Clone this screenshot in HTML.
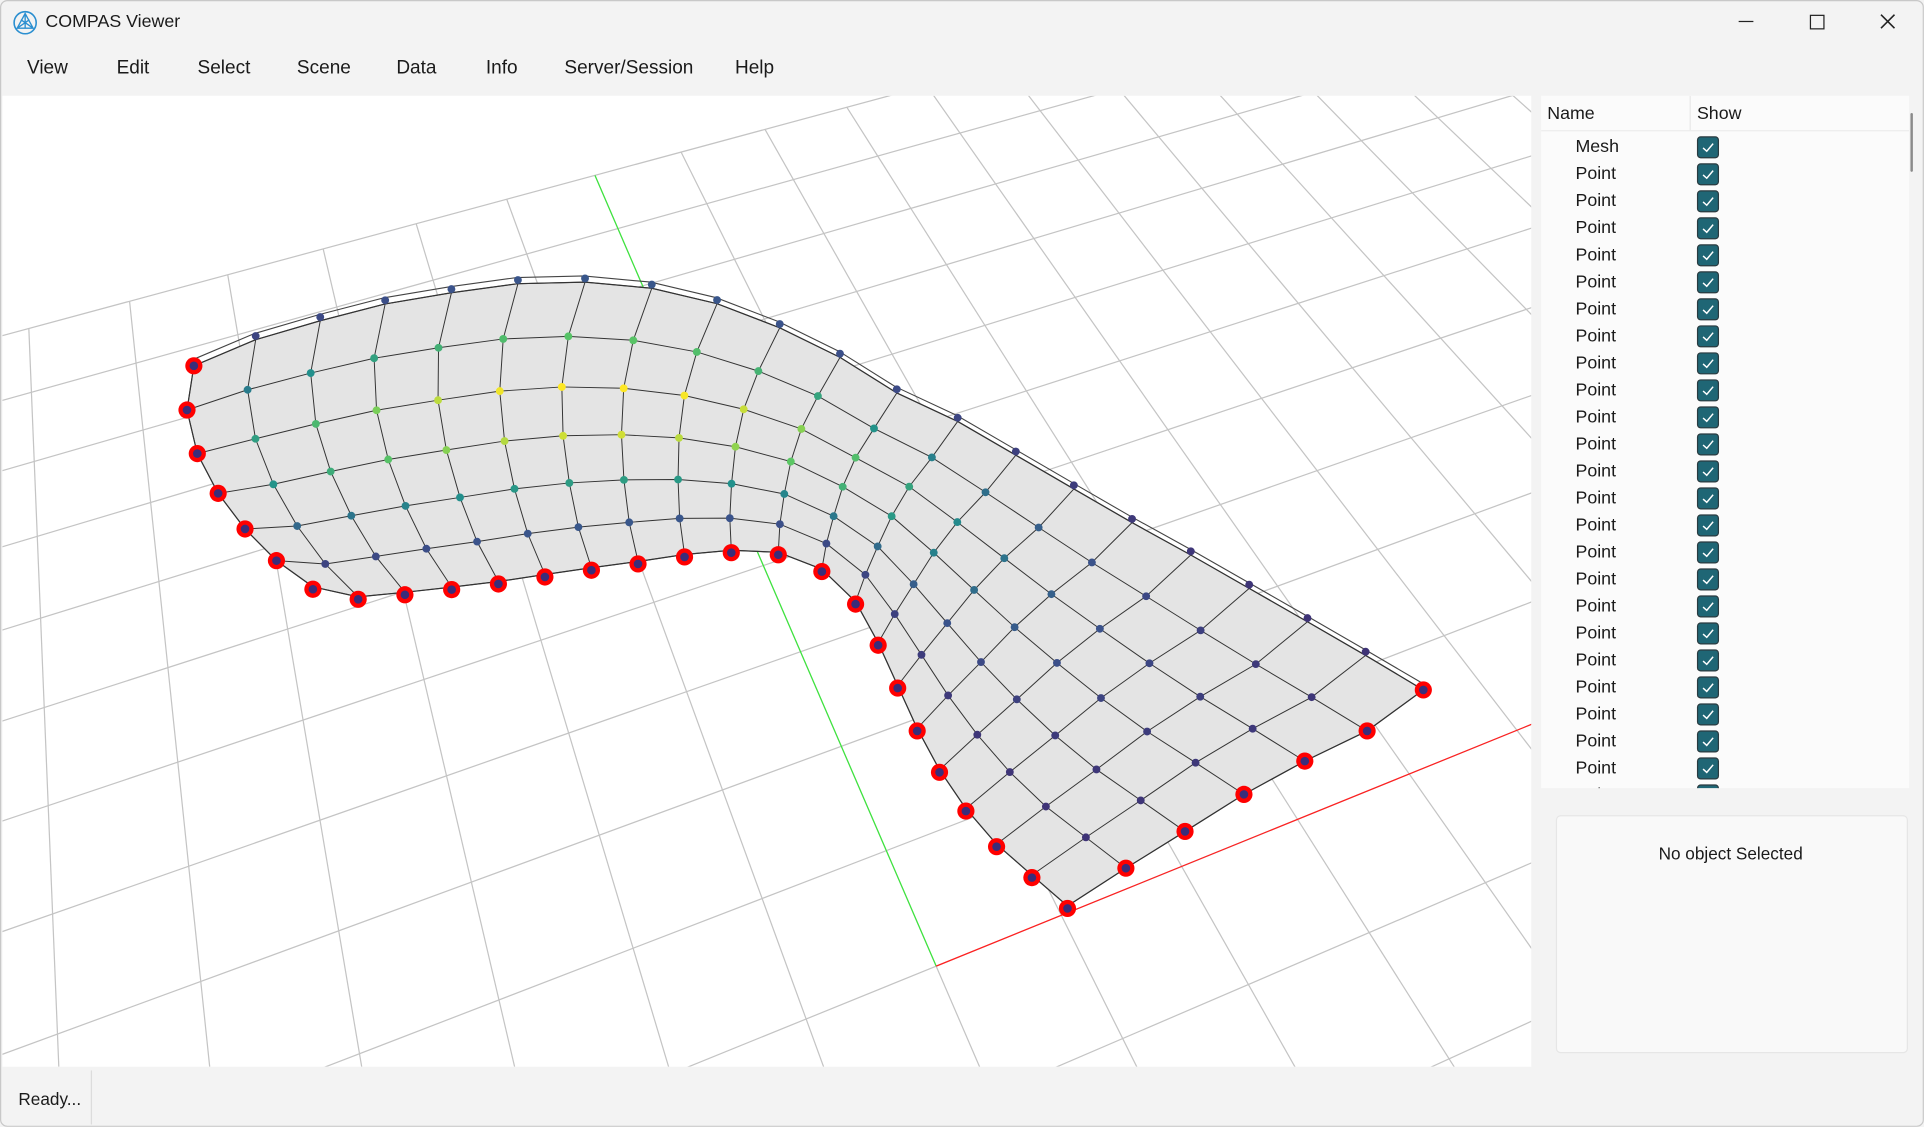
<!DOCTYPE html>
<html><head><meta charset="utf-8">
<style>
html,body{margin:0;padding:0;width:1924px;height:1127px;overflow:hidden;background:#f3f3f3;}
#wrap{position:absolute;left:0;top:0;width:1924px;height:1127px;overflow:hidden;}
#root{position:absolute;left:0;top:0;width:1568px;height:918px;overflow:hidden;transform-origin:0 0;transform:scale(1.2270,1.2276);font-family:"Liberation Sans",sans-serif;color:#1a1a1a;background:#f3f3f3;}
.t{position:absolute;white-space:nowrap;}
.menu{font-size:15.5px;top:47px;}
#vp{position:absolute;left:2px;top:78px;width:1246px;height:791px;background:#fff;overflow:hidden;}
#tree{position:absolute;left:1256px;top:78px;width:300px;height:564px;background:#fbfbfb;overflow:hidden;}
.row{position:absolute;left:0;width:300px;height:22px;font-size:14.5px;}
.row span{position:absolute;left:28px;top:3px;}
.cb{position:absolute;left:127px;top:2px;width:16px;height:16px;border-radius:3px;background:#1f6675;border:1px solid #2a3b40;}
#status{position:absolute;left:0;top:870px;width:1568px;height:48px;background:#f3f3f3;}
</style></head><body>
<div id="wrap">
<div id="root">
 <div style="position:absolute;left:0;top:0;width:1566px;height:916px;border:1px solid #c8c8c8;border-radius:6px;pointer-events:none;z-index:5"></div>
 <svg class="t" style="left:10px;top:8px" width="21" height="21" viewBox="0 0 21 21">
  <circle cx="10.5" cy="10.5" r="9" fill="none" stroke="#2b8fd0" stroke-width="1.3"/>
  <path d="M10.5 3 L4 15 H17 Z M10.5 3 V15 M4 15 L14 8 M17 15 L7 8" fill="none" stroke="#2b8fd0" stroke-width="1.1"/>
 </svg>
 <div class="t" style="left:37px;top:10px;font-size:14.5px">COMPAS Viewer</div>
 <div class="t" style="left:1417px;top:17px;width:12px;height:1px;background:#222"></div>
 <div class="t" style="left:1475px;top:12px;width:10px;height:10px;border:1.2px solid #222"></div>
 <svg class="t" style="left:1532px;top:11px" width="13" height="13"><path d="M1 1L12 12M12 1L1 12" stroke="#222" stroke-width="1.3"/></svg>
 <div class="t menu" style="left:22px">View</div>
 <div class="t menu" style="left:95px">Edit</div>
 <div class="t menu" style="left:161px">Select</div>
 <div class="t menu" style="left:242px">Scene</div>
 <div class="t menu" style="left:323px">Data</div>
 <div class="t menu" style="left:396px">Info</div>
 <div class="t menu" style="left:460px">Server/Session</div>
 <div class="t menu" style="left:599px">Help</div>
 <div id="vp"><svg id="sv" width="1246" height="791" viewBox="2 78 1246 791"></svg></div>
 <div id="tree">
  <div class="t" style="left:5px;top:7px;font-size:14.5px">Name</div>
  <div class="t" style="left:127px;top:7px;font-size:14.5px">Show</div>
  <div class="t" style="left:121px;top:0;width:1px;height:28px;background:#e8e8e8"></div>
  <div class="t" style="left:0;top:28px;width:300px;height:1px;background:#ececec"></div>
  <div id="rows"></div>
 </div>
 <div class="t" style="left:1557px;top:92px;width:2px;height:48px;background:#8a8a8a;border-radius:1px"></div>
 <div class="t" style="left:1268px;top:664px;width:285px;height:192px;background:#f9f9f9;border:1px solid #e6e6e6;border-radius:4px"></div>
 <div class="t" style="left:1268px;top:687px;width:285px;text-align:center;font-size:14px">No object Selected</div>
 <div id="status">
  <div class="t" style="left:15px;top:17px;font-size:14px">Ready...</div>
  <div class="t" style="left:74px;top:2px;width:1px;height:44px;background:#dcdcdc"></div>
 </div>
</div>
</div>
<script>
(function(){
var rows=document.getElementById('rows'),h='';
for(var k=0;k<25;k++){
 var y=31+22*k;
 h+='<div class="row" style="top:'+y+'px"><span>'+(k==0?'Mesh':'Point')+'</span><div class="cb"><svg width="16" height="16" style="position:absolute;left:0;top:0"><path d="M4 8.5L7 11.2L12.2 5" fill="none" stroke="#fff" stroke-width="1.2"/></svg></div></div>';
}
rows.innerHTML=h;
var sv=document.getElementById('sv'),out='';
var a=0.0196,b=0.054,VX=[6066,-1366],VY=[-30,-1050],O=[763,787];
function P(X,Y){var w=1+a*X+b*Y;return[(O[0]+VX[0]*a*X+VY[0]*b*Y)/w,(O[1]+VX[1]*a*X+VY[1]*b*Y)/w];}
function ln(p,q,c,w){out+='<line x1="'+p[0].toFixed(1)+'" y1="'+p[1].toFixed(1)+'" x2="'+q[0].toFixed(1)+'" y2="'+q[1].toFixed(1)+'" stroke="'+c+'" stroke-width="'+w+'"/>';}
for(var i=-10;i<=10;i++){ln(P(i,-10),P(i,10),'#c4c4c4',1);ln(P(-10,i),P(10,i),'#c4c4c4',1);}
ln(P(0,0),P(0,10),'#3ce63c',1);
ln(P(0,0),P(10,0),'#ff2020',1);
function rs(pts,n){var L=[0];for(var i=1;i<pts.length;i++){L.push(L[i-1]+Math.hypot(pts[i][0]-pts[i-1][0],pts[i][1]-pts[i-1][1]));}
 var T=L[L.length-1],r=[],s=0;for(var k=0;k<=n;k++){var d=T*k/n;while(s<pts.length-2&&L[s+1]<d)s++;var f=(d-L[s])/(L[s+1]-L[s]||1);r.push([pts[s][0]+f*(pts[s+1][0]-pts[s][0]),pts[s][1]+f*(pts[s+1][1]-pts[s][1])]);}return r;}
var top=[[158,298],[210,276],[300,250],[406,232],[462,229],[517,232],[572,243],[625,262],[680,288],[722,316],[780,343],[830,372],[878,400],[930,430],[985,460],[1040,492],[1098,525],[1160,562]];
var bot=[[255,478],[283,487],[325,483],[380,477],[420,472],[462,465],[510,459],[555,452],[598,448],[636,450],[668,462],[695,486],[715,522],[735,566],[755,610],[780,650],[808,684],[840,712],[870,738]];
var lef=[[158,298],[152,332],[160,368],[182,410],[216,450],[255,478]];
var rig=[[1160,562],[1140,578],[1100,605],[1044,628],[968,676],[905,715],[870,738]];
var NU=20,NV=6,T=rs(top,NU),B=rs(bot,NU),Lf=rs(lef,NV),R=rs(rig,NV);
var TL=top[0],TR=top[top.length-1],BL=bot[0],BR=bot[bot.length-1],G=[];
for(var i=0;i<=NU;i++){G[i]=[];var u=i/NU;for(var j=0;j<=NV;j++){var v=j/NV,p=[];
 for(var c=0;c<2;c++){p[c]=(1-v)*T[i][c]+v*B[i][c]+(1-u)*Lf[j][c]+u*R[j][c]-((1-u)*(1-v)*TL[c]+u*(1-v)*TR[c]+(1-u)*v*BL[c]+u*v*BR[c]);}
 G[i][j]=p;}}
var poly=[];for(i=0;i<=NU;i++)poly.push(G[i][0]);for(j=0;j<=NV;j++)poly.push(G[NU][j]);for(i=NU;i>=0;i--)poly.push(G[i][NV]);for(j=NV;j>=0;j--)poly.push(G[0][j]);
out+='<polygon points="'+poly.map(function(p){return p[0].toFixed(1)+','+p[1].toFixed(1)}).join(' ')+'" fill="#e4e4e4" stroke="#333" stroke-width="1"/>';
var st=T.map(function(p,i){return [p[0]+(i<NU?-1:0),p[1]-5];});
out+='<polyline points="'+st.map(function(p){return p[0].toFixed(1)+','+p[1].toFixed(1)}).join(' ')+'" fill="none" stroke="#444" stroke-width="0.9"/>';
for(i=0;i<=NU;i++){var d='';for(j=0;j<=NV;j++)d+=(j?'L':'M')+G[i][j][0].toFixed(1)+' '+G[i][j][1].toFixed(1);out+='<path d="'+d+'" fill="none" stroke="#333" stroke-width="0.8"/>';}
for(j=0;j<=NV;j++){var d='';for(i=0;i<=NU;i++)d+=(i?'L':'M')+G[i][j][0].toFixed(1)+' '+G[i][j][1].toFixed(1);out+='<path d="'+d+'" fill="none" stroke="#333" stroke-width="0.8"/>';}
var vir=[[68,1,84],[59,82,139],[33,145,140],[94,201,98],[253,231,37]];
function col(t){t=Math.max(0,Math.min(1,t))*4;var k=Math.min(3,Math.floor(t)),f=t-k,c=[];for(var m=0;m<3;m++)c[m]=Math.round(vir[k][m]+f*(vir[k+1][m]-vir[k][m]));return 'rgb('+c+')';}
for(i=0;i<=NU;i++)for(j=0;j<=NV;j++){var p=G[i][j],u=i/NU,v=j/NV;
 var bnd=(i==0||i==NU||j==NV);
 if(bnd){var py=p[1]+(j==NV?2:0);out+='<circle cx="'+p[0].toFixed(1)+'" cy="'+py.toFixed(1)+'" r="7" fill="#f00"/><circle cx="'+p[0].toFixed(1)+'" cy="'+py.toFixed(1)+'" r="3.5" fill="#3a2d7a"/>';}
 else{var hh=Math.exp(-Math.pow((u-0.33)/0.32,2))*Math.exp(-Math.pow((v-0.38)/0.32,2));if(j==0)hh*=0.55;
 out+='<circle cx="'+p[0].toFixed(1)+'" cy="'+(p[1]-(j==0?3:0)).toFixed(1)+'" r="3.2" fill="'+col(0.15+hh*0.9)+'"/>';}
}
sv.innerHTML=out;
})();
</script>
</body></html>
